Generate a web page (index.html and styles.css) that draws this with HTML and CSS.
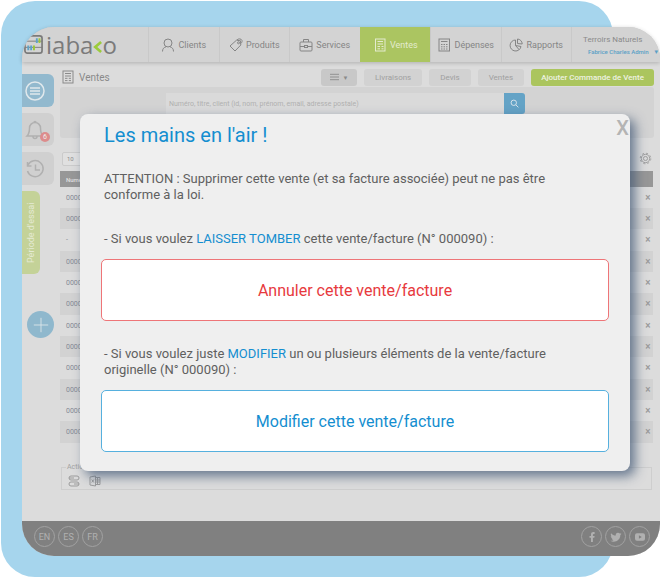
FILE: index.html
```html
<!DOCTYPE html>
<html lang="fr">
<head>
<meta charset="utf-8">
<title>iabako - Ventes</title>
<link rel="stylesheet" href="styles.css">
</head>
<body>
<div class="stage">
<div class="backdrop"></div>
<div class="app">
  <header class="topbar">
    <a class="logo" href="#" aria-label="iabako">
      <svg class="logo-mark" viewBox="0 0 20 20">
        <rect x="1" y="1" width="18" height="18" rx="2.500" stroke-width="1.800"/>
        <path d="M1 6.500h18M1 13h18"/>
        <path d="M4.500 11v5M7.500 11v5M13.500 3.500v5" stroke="#5fa3c7" stroke-width="2"/>
        <path d="M10.500 11v5M16.300 3.500v5" stroke="#9cc63a" stroke-width="2"/>
      </svg>
      <span>iaba</span><svg class="logo-k" viewBox="0 0 10 14"><path d="M9 1.500L2.500 7L9 12.500"/></svg><span>o</span>
    </a>
    <nav class="nav">
      <a href="#"><svg viewBox="0 0 14 14"><circle cx="7" cy="5" r="4"/><path d="M1.500 13.500c0-3 1.500-4 3.500-4.700M12.500 13.500c0-3-1.500-4-3.500-4.700"/></svg>Clients</a>
      <a href="#"><svg viewBox="0 0 14 14"><path d="M1 8L7.500 2.200L11.500 2.800L11.800 7L6 13z"/><circle cx="9.500" cy="4.800" r="1"/><path d="M8 2c1-1.600 4.500-1.500 5 .5c.3 1.500-.5 2.500-1.500 3"/></svg>Produits</a>
      <a href="#"><svg viewBox="0 0 14 14"><rect x="1" y="4" width="12" height="9" rx="1"/><path d="M4.500 4V1.500h5V4M1 8.500h4.500M8.500 8.500H13"/><rect x="5.500" y="7.500" width="3" height="2"/></svg>Services</a>
      <a href="#" class="active"><svg viewBox="0 0 14 14"><rect x="2.500" y="1" width="9.500" height="12"/><path d="M4.500 3.500h5.500M4.500 6h5.500M4.500 8.500h2.500M4.500 10.800h2.500M8.500 8.500h2M8.500 10.800h2"/></svg>Ventes</a>
      <a href="#"><svg viewBox="0 0 14 14"><rect x="2" y="1" width="10.500" height="12"/><path d="M4 3.500h6.500"/><path d="M4 6.500h6.500M4 8.800h6.500M4 11h6.500" stroke-dasharray="1.500 1"/></svg>Dépenses</a>
      <a href="#"><svg viewBox="0 0 14 14"><path d="M6.500 2a5.500 5.500 0 1 0 5.500 6.500L6.500 7.500z"/><path d="M8.500 1a5 5 0 0 1 4.700 5L8.500 5.500zM6.500 7.500l3.500 4"/></svg>Rapports</a>
    </nav>
    <div class="account">
      <div class="company">Terroirs Naturels</div>
      <button class="user">Fabrice Charles Admin <span>▼</span></button>
    </div>
  </header>

  <div class="body">
    <aside class="sidebar">
      <button class="tile tile-blue" aria-label="Menu"><svg viewBox="0 0 20 20"><circle cx="10" cy="10" r="9"/><path d="M5 7h10M5 10h10M5 13h10"/></svg></button>
      <button class="tile" aria-label="Notifications"><svg viewBox="0 0 20 20"><path d="M2 16c2-2 2.500-4 2.500-8A5.500 5.500 0 0 1 15.500 8c0 4 .5 6 2.500 8zM8 16.500a2 2 0 0 0 4 0M9 2.500a1 1 0 0 1 2 0"/></svg><span class="badge">6</span></button>
      <button class="tile" aria-label="Historique"><svg viewBox="0 0 20 20"><path d="M3 6A8 8 0 1 1 2.500 12M2.500 3v4h4M10.500 5.500V11h4.500"/></svg></button>
      <a class="trial" href="#">Période d'essai</a>
      <button class="add" aria-label="Ajouter"><svg viewBox="0 0 20 20"><path d="M10 2v16M2 10h16"/></svg></button>
    </aside>

    <main class="content">
      <div class="toolbar">
        <h1><svg viewBox="0 0 12 14"><rect x="1" y="1" width="10" height="12"/><path d="M3 3.500h6M3 6h6M3 8.300h2.500M3 10.600h2.500M6.800 8.300H9M6.800 10.600H9"/></svg>Ventes</h1>
        <button class="btn btn-list" aria-label="Liste"><svg viewBox="0 0 10 8"><path d="M0 1h10M0 4h10M0 7h10"/></svg><span>▼</span></button>
        <button class="btn">Livraisons</button>
        <button class="btn">Devis</button>
        <button class="btn">Ventes</button>
        <button class="btn btn-green">Ajouter Commande de Vente</button>
      </div>
      <form class="search">
        <input type="text" aria-label="Rechercher" placeholder="Numéro, titre, client (id, nom, prénom, email, adresse postale)">
        <button type="button" aria-label="Rechercher"><svg viewBox="0 0 10 10"><circle cx="4.200" cy="4.200" r="3"/><path d="M6.500 6.500L9.300 9.300"/></svg></button>
      </form>
      <div class="list-options">
        <select aria-label="Lignes par page"><option>10</option></select>
        <button aria-label="Réglages"><svg viewBox="0 0 14 14"><circle cx="7" cy="7" r="2.200"/><circle cx="7" cy="7" r="4.500"/><circle cx="7" cy="7" r="5.700" stroke-dasharray="2.200 2.280"/></svg></button>
      </div>
      <table class="sales">
        <thead><tr><th>Numéro</th><th></th></tr></thead>
        <tbody>
          <tr><td>000099</td><td><button aria-label="Supprimer">×</button></td></tr>
          <tr><td>000098</td><td><button aria-label="Supprimer">×</button></td></tr>
          <tr><td>-</td><td><button aria-label="Supprimer">×</button></td></tr>
          <tr><td>000097</td><td><button aria-label="Supprimer">×</button></td></tr>
          <tr><td>000096</td><td><button aria-label="Supprimer">×</button></td></tr>
          <tr><td>000095</td><td><button aria-label="Supprimer">×</button></td></tr>
          <tr><td>000094</td><td><button aria-label="Supprimer">×</button></td></tr>
          <tr><td>000093</td><td><button aria-label="Supprimer">×</button></td></tr>
          <tr><td>000092</td><td><button aria-label="Supprimer">×</button></td></tr>
          <tr><td>000091</td><td><button aria-label="Supprimer">×</button></td></tr>
          <tr><td>000090</td><td><button aria-label="Supprimer">×</button></td></tr>
          <tr><td>000089</td><td><button aria-label="Supprimer">×</button></td></tr>
        </tbody>
      </table>
      <fieldset class="actions">
        <legend>Actions</legend>
        <button aria-label="Options"><svg viewBox="0 0 12 12"><rect x="1" y="1" width="10" height="4" rx="2"/><rect x="1" y="7" width="10" height="4" rx="2"/><path d="M1 3h5M6 9h5"/></svg></button>
        <button aria-label="Excel"><svg viewBox="0 0 12 12"><path d="M6.500 1L1 2v8l5.500 1zM6.500 2.500H11v7H6.500M8.500 2.500v7M6.500 5H11M6.500 7H11M2.700 4.500l2.200 3M4.900 4.500l-2.200 3"/></svg></button>
      </fieldset>
    </main>
  </div>

  <footer class="footer">
    <div class="round-links"><a href="#">EN</a><a href="#">ES</a><a href="#">FR</a></div>
    <div class="round-links social">
      <a href="#" aria-label="Facebook"><svg viewBox="0 0 12 12"><path d="M5 11V6.800H3.500V4.900H5V3.500C5 1.900 6 1.100 7.300 1.100h1.300V3H7.700c-.6 0-.8.300-.8.800v1.100h1.700l-.3 1.900H6.900V11z"/></svg></a>
      <a href="#" aria-label="Twitter"><svg viewBox="0 0 12 12"><path d="M11.500 2.800l-1.200 1.200c.1 4-3.300 6.700-6.600 6.700-1.200 0-2.300-.3-3.200-.9 1.200.1 2.300-.2 3.200-.9-1 0-1.800-.7-2.100-1.500h1C1.500 7.100.7 6.200.8 5.100l1 .3C.8 4.600.5 3.200 1.100 2.200c1.200 1.400 2.800 2.300 4.700 2.400C5.500 3 6.500 1.700 8 1.700c.7 0 1.300.3 1.700.7l1.400-.5-.8 1.100z"/></svg></a>
      <a href="#" aria-label="YouTube"><svg viewBox="0 0 12 12"><path fill-rule="evenodd" d="M3 2.300h6a2 2 0 0 1 2 2v3.400a2 2 0 0 1-2 2H3a2 2 0 0 1-2-2V4.300a2 2 0 0 1 2-2zM4.900 4.300v3.400L7.800 6z"/></svg></a>
    </div>
  </footer>

  <section class="modal" role="dialog" aria-labelledby="modal-title">
    <button class="close" aria-label="Fermer">X</button>
    <h2 id="modal-title">Les mains en l'air !</h2>
    <p class="warning">ATTENTION : Supprimer cette vente (et sa facture associée) peut ne pas être conforme à la loi.</p>
    <p>- Si vous voulez <em>LAISSER TOMBER</em> cette vente/facture (N° 000090) :</p>
    <button class="choice choice-red">Annuler cette vente/facture</button>
    <p>- Si vous voulez juste <em>MODIFIER</em> un ou plusieurs éléments de la vente/facture originelle (N° 000090) :</p>
    <button class="choice choice-blue">Modifier cette vente/facture</button>
  </section>
</div>
</div>
</body>
</html>
```
FILE: styles.css
```css
* { box-sizing: border-box; }
body { margin: 0; background: #fff; font-family: Roboto, "Liberation Sans", sans-serif; color: #8a8a8a; }
button, input, select { font: inherit; color: inherit; border: 0; padding: 0; margin: 0; background: none; }
a { color: inherit; text-decoration: none; }
svg { display: block; flex: none; fill: none; stroke: currentColor; }

.stage { position: relative; padding: 27px 0 21px 22px; }
.backdrop { position: absolute; inset: 1px 47px 0 1px; background: #a6d5ed; border-radius: 34px; }
.app { position: relative; background: #dcdcdc; border-radius: 32px; }

.topbar { display: flex; height: 35px; background: #d3d3d3; border-radius: 32px 32px 0 0; box-shadow: 0 1px 4px rgba(0, 0, 0, .2); overflow: hidden; }
.logo { display: flex; align-items: center; width: 126px; padding-left: 2px; font-family: "Open Sans", sans-serif; font-size: 24px; line-height: 32px; font-weight: 500; color: #7b7b7b; }
.logo-mark { width: 19px; height: 19px; margin-right: 3px; }
.logo-k { width: 9px; height: 14px; margin-top: 4px; stroke: #9bcb3c; stroke-width: 3; }
.nav { display: flex; flex: 1; }
.nav a { display: flex; flex: 1; align-items: center; justify-content: center; gap: 3px; border-left: 1px solid #c9c9c9; font-size: 9px; color: #858585; }
.nav svg { width: 14px; height: 14px; }
.nav .active { background: #abc561; color: #e4ebcf; border-color: #abc561; }
.account { width: 89px; padding: 7px 0 0 11px; border-left: 1px solid #c9c9c9; white-space: nowrap; }
.company { font-size: 8px; line-height: 12px; }
.user { display: block; margin-left: 5px; font-size: 6px; line-height: 12px; color: #5a9fc6; font-weight: 500; }
.user span { margin-left: 3px; }

.body { display: flex; }
.sidebar { display: flex; flex-direction: column; align-items: flex-start; width: 38px; padding-top: 12px; }
.tile { position: relative; display: flex; align-items: center; justify-content: center; width: 32px; height: 33px; margin-bottom: 6px; padding-right: 6px; background: #d0d0d0; border-radius: 0 6px 6px 0; color: #b0b0b0; }
.tile svg { width: 20px; height: 20px; stroke-width: 1.5; }
.tile-blue { background: #92b9ce; color: #e0e8ec; }
.badge { position: absolute; right: 4px; bottom: 4px; width: 10px; height: 10px; border-radius: 5px; background: #dc8c8c; color: #eee; font-size: 7px; line-height: 10px; }
.trial { width: 18px; height: 83px; border-radius: 6px 0 0 6px; background: #c4d298; color: #e4ead4; font-size: 9px; line-height: 18px; text-align: center; writing-mode: vertical-rl; transform: rotate(180deg); }
.add { display: flex; align-items: center; justify-content: center; width: 27px; height: 27px; margin: 37px 0 0 5px; border-radius: 50%; background: #8fb8cd; color: #dbe5ea; }
.add svg { width: 18px; height: 18px; }

.content { flex: 1; min-width: 0; padding: 0 6px 31px 0; }
.toolbar { display: flex; align-items: center; gap: 7px; height: 25px; padding: 5px 0 0 2px; }
.toolbar h1 { display: flex; align-items: center; gap: 5px; flex: 1; margin: 0; font-size: 10px; font-weight: 400; }
.toolbar h1 svg { width: 12px; height: 14px; }
.btn { display: flex; align-items: center; justify-content: center; height: 17px; padding: 0 11px; border-radius: 3px; background: #d2d2d2; color: #a0a0a0; font-size: 8px; white-space: nowrap; }
.btn-list { gap: 4px; width: 36px; padding: 0; background: #c8c8c8; color: #8a8a8a; font-size: 6px; }
.btn-list svg { width: 9px; height: 8px; }
.btn-green { padding: 0 10px; background: #abc55e; color: #eef2e2; font-weight: 500; }
.search { display: flex; height: 51px; padding: 6px 129px 0 106px; background: #d3d3d3; border-radius: 3px; }
.search input { flex: 1; min-width: 0; height: 21px; padding: 0 3px; background: #dadada; font-size: 7px; }
.search input::placeholder { color: #b0b0b0; opacity: 1; }
.search button { display: flex; align-items: center; justify-content: center; width: 21px; height: 21px; border-radius: 0 3px 3px 0; background: #64a3c6; color: #e0e8ee; }
.search svg { width: 9px; height: 9px; }
.list-options { display: flex; align-items: center; justify-content: space-between; height: 33px; padding: 8px 2px 0 2px; }
.list-options select { appearance: none; width: 40px; height: 14px; padding: 0 4px; border: 1px solid #cbcbcb; border-radius: 2px; background: #e0e0e0; font-size: 6px; }
.list-options svg { width: 13px; height: 13px; color: #9c9c9c; }

.sales { width: calc(100% - 1px); border-collapse: collapse; font-size: 7px; }
.sales th { height: 16px; padding: 0 6px; background: #979797; color: #e0e0e0; text-align: left; font-size: 6px; font-weight: 500; }
.sales td { height: 21px; padding: 0 6px; color: #858a95; }
.sales tr:nth-child(3n) td { height: 22px; }
.sales tbody tr:nth-child(even) { background: #d2d2d2; }
.sales td:last-child { width: 16px; padding: 0 2px; }
.sales td button { display: block; width: 6px; margin-left: auto; font-size: 10px; line-height: 10px; font-weight: 500; color: #9b9b9b; }

.actions { display: flex; gap: 9px; height: 27px; margin: 20px 2px 0 1px; padding: 1px 6px 0; border: 1px solid #cecece; }
.actions legend { padding: 0 1px; margin-left: -2px; font-size: 7px; line-height: 9px; color: #a2a2a2; }
.actions svg { width: 12px; height: 12px; color: #9c9c9c; }

.footer { display: flex; align-items: center; justify-content: space-between; height: 35px; padding: 0 10px 4px 12px; background: #808080; border-radius: 0 0 32px 32px; }
.round-links { display: flex; gap: 3px; }
.round-links a { display: flex; align-items: center; justify-content: center; width: 21px; height: 21px; border: 1px solid #a2a2a2; border-radius: 50%; color: #b0b0b0; font-size: 9px; }
.social svg { width: 12px; height: 12px; fill: currentColor; stroke: none; }

.modal { position: absolute; top: 87px; left: 58px; right: 30px; padding: 8px 21px 19px; background: #efefef; border-radius: 8px; box-shadow: 5px 5px 12px rgba(62, 84, 115, .75); color: #606060; }
.modal h2 { margin: 0 0 23px 3px; font-size: 20px; line-height: 26px; font-weight: 400; color: #148ed0; }
.modal p { margin: 25px 40px 12px 3px; font-size: 13px; line-height: 16px; }
.modal .warning { margin-top: 23px; margin-bottom: 28px; }
.modal em { font-style: normal; color: #148ed0; }
.close { position: absolute; top: 2px; right: 1px; font-size: 20px; line-height: 24px; font-weight: 500; color: #b4b4b4; }
.choice { display: block; width: 100%; height: 62px; border: 1px solid; border-radius: 5px; background: #fff; font-size: 16px; }
.choice-red { color: #e73a3e; border-color: #ee7578; }
.choice-blue { color: #148ed0; border-color: #56b0de; }
```
